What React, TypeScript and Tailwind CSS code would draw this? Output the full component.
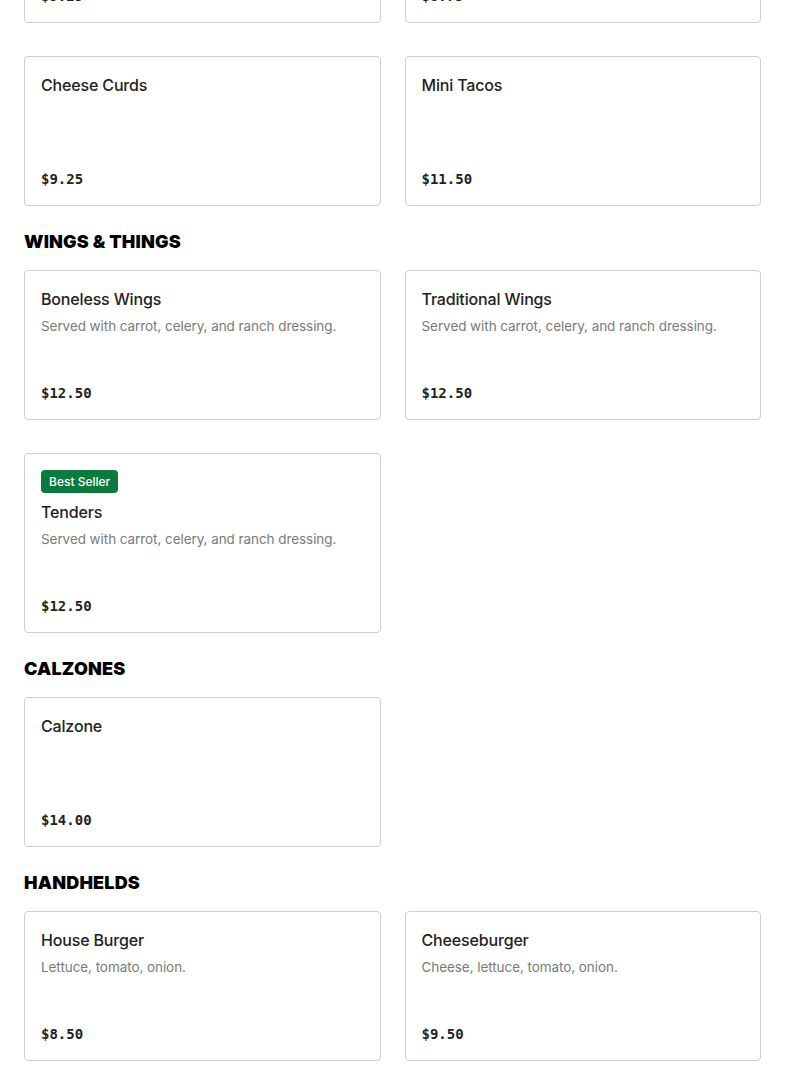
import React from 'react';

type Item = {
  name: string;
  desc?: string;
  price: string;
  badge?: string;
};

type Section = {
  title?: string;
  items: Item[];
};

const sections: Section[] = [
  {
    items: [
      { name: 'Mozzarella Sticks', price: '$9.25' },
      { name: 'Onion Rings', price: '$8.75' },
      { name: 'Cheese Curds', price: '$9.25' },
      { name: 'Mini Tacos', price: '$11.50' },
    ],
  },
  {
    title: 'WINGS & THINGS',
    items: [
      { name: 'Boneless Wings', desc: 'Served with carrot, celery, and ranch dressing.', price: '$12.50' },
      { name: 'Traditional Wings', desc: 'Served with carrot, celery, and ranch dressing.', price: '$12.50' },
      { name: 'Tenders', desc: 'Served with carrot, celery, and ranch dressing.', price: '$12.50', badge: 'Best Seller' },
    ],
  },
  {
    title: 'CALZONES',
    items: [{ name: 'Calzone', price: '$14.00' }],
  },
  {
    title: 'HANDHELDS',
    items: [
      { name: 'House Burger', desc: 'Lettuce, tomato, onion.', price: '$8.50' },
      { name: 'Cheeseburger', desc: 'Cheese, lettuce, tomato, onion.', price: '$9.50' },
    ],
  },
];

const MenuCard: React.FC<{ item: Item }> = ({ item }) => (
  <div className="flex min-h-[150px] flex-col rounded-[4px] border border-[#cfcfcf] bg-white p-4">
    {item.badge && (
      <div className="mb-[7px] flex">
        <span className="flex h-[23px] items-center rounded-[4px] bg-[#0b7a3e] px-2 text-[12px] font-medium text-white">
          {item.badge}
        </span>
      </div>
    )}
    <div className="text-[16px] font-medium leading-6 tracking-[-0.01em] text-[#222]">{item.name}</div>
    {item.desc && (
      <div className="mt-1 text-[13.5px] leading-[22px] tracking-[-0.005em] text-[#7a7a7a]">{item.desc}</div>
    )}
    <div className="mt-auto pt-[46px] font-['DejaVu_Sans_Mono',monospace] text-[14px] font-bold leading-5 text-[#222]">
      {item.price}
    </div>
  </div>
);

export default function App() {
  return (
    <div className="min-h-screen overflow-hidden bg-white px-6 font-['Inter',sans-serif]">
      <div className="-mt-[127px]">
        {sections.map((s, i) => (
          <div key={i} className={i > 0 ? 'mt-6' : ''}>
            {s.title && (
              <h2 className="mb-4 text-[18px] font-black leading-6 tracking-[0.01em] text-black">{s.title}</h2>
            )}
            <div className="grid grid-cols-2 gap-x-6 gap-y-[33px]">
              {s.items.map((it) => (
                <MenuCard key={it.name} item={it} />
              ))}
            </div>
          </div>
        ))}
      </div>
    </div>
  );
}
